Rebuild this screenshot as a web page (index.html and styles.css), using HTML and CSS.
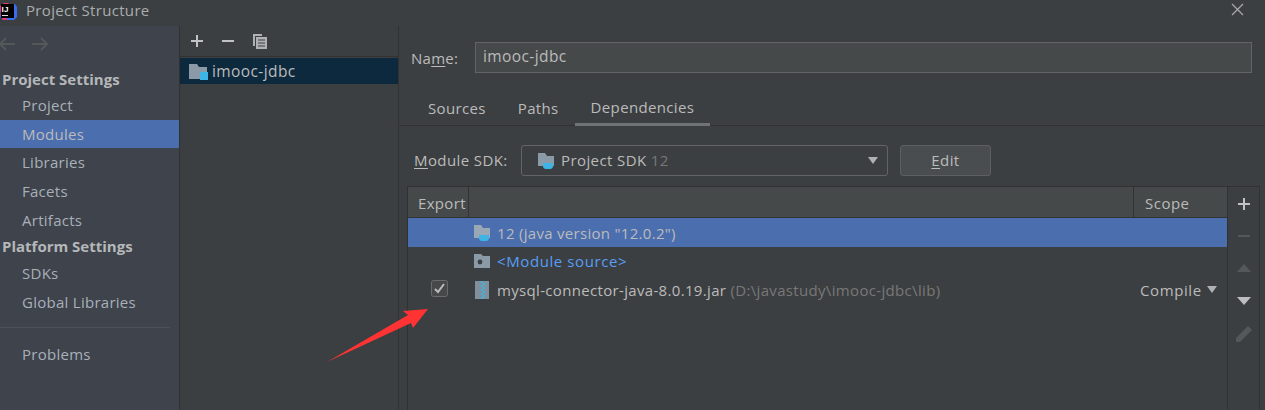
FILE: index.html
```html
<!DOCTYPE html>
<html lang="en">
<head>
<meta charset="utf-8">
<title>Project Structure</title>
<link rel="stylesheet" href="styles.css">
</head>
<body>
<div class="window">
  <header class="titlebar">
    <svg class="logo" width="17" height="17" viewBox="0 0 17 17"><path d="M2 1h13l2 3v10l-3 3H3L0 14z" fill="#3b6cf0"/><path d="M0 3l4-3h5L0 10z" fill="#f0366f"/><path d="M0 12l3 5h5l-8-6z" fill="#f0366f"/><rect x="1" y="1" width="13" height="14" fill="#000"/><rect x="2" y="12" width="6" height="1" fill="#ddd"/><text x="1.6" y="8.5" class="logo-text">IJ</text></svg>
    <span class="title">Project Structure</span>
    <svg class="close" width="13" height="13" viewBox="0 0 13 13"><path d="M1 1l11 11M12 1L1 12" stroke="#aaa" stroke-width="1.2" fill="none"/></svg>
  </header>
  <div class="main">
    <nav class="sidebar">
      <div class="arrows">
        <svg width="18" height="14" viewBox="0 0 18 14"><path d="M1 7h15M7 1L1 7l6 6" stroke="#55585b" stroke-width="2" fill="none"/></svg>
        <svg width="18" height="14" viewBox="0 0 18 14"><path d="M1 7h15M10 1l6 6-6 6" stroke="#55585b" stroke-width="2" fill="none"/></svg>
      </div>
      <div class="group">Project Settings</div>
      <div class="item">Project</div>
      <div class="item active">Modules</div>
      <div class="item">Libraries</div>
      <div class="item">Facets</div>
      <div class="item">Artifacts</div>
      <div class="group group-b">Platform Settings</div>
      <div class="item">SDKs</div>
      <div class="item">Global Libraries</div>
      <div class="sep"></div>
      <div class="item">Problems</div>
    </nav>
    <section class="modules">
      <div class="mod-toolbar">
        <svg width="14" height="14" viewBox="0 0 14 14"><path d="M7 1v12M1 7h12" stroke="#c0c2c4" stroke-width="2"/></svg>
        <svg width="14" height="14" viewBox="0 0 14 14"><path d="M1 7h12" stroke="#c0c2c4" stroke-width="2"/></svg>
        <svg width="16" height="17" viewBox="0 0 16 17"><path d="M1 1h9v2H3v10H1z" fill="#afb1b3"/><path d="M4 4h11v12H4z" fill="#afb1b3"/><path d="M6 7h7M6 10h7M6 13h7" stroke="#3c3f41" stroke-width="1"/></svg>
      </div>
      <div class="mod-row">
        <svg width="19" height="17" viewBox="0 0 19 17"><path d="M0 1h8l2 3h8v12H0z" fill="#8a9aa6"/><rect x="11" y="9" width="8" height="8" fill="#3db3e6"/></svg>
        <span>imooc-jdbc</span>
      </div>
    </section>
    <section class="detail">
      <div class="name-row">
        <label class="name-label">Na<u>m</u>e:</label>
        <div class="name-input">imooc-jdbc</div>
      </div>
      <div class="tabs">
        <div class="tab">Sources</div>
        <div class="tab">Paths</div>
        <div class="tab on">Dependencies</div>
      </div>
      <div class="sdk-row">
        <label class="sdk-label"><u>M</u>odule SDK:</label>
        <div class="combo">
          <svg width="18" height="18" viewBox="0 0 18 18"><path d="M1 1h7l2 3h7v10H1z" fill="#8a9aa6"/><path d="M6 11h10v3c0 2-1 3-3 3H9c-2 0-3-1-3-3z" fill="#3db3e6"/></svg>
          <span>Project SDK <span class="dim">12</span></span>
          <i class="caret combo-caret"></i>
        </div>
        <div class="edit"><u>E</u>dit</div>
      </div>
      <div class="deps">
        <div class="table">
          <div class="thead">
            <div class="th th-export">Export</div>
            <div class="th th-name"></div>
            <div class="th th-scope">Scope</div>
          </div>
          <div class="tr selected">
            <div class="c-name">
              <svg width="18" height="18" viewBox="0 0 18 18"><path d="M1 1h7l2 3h7v10H1z" fill="#9aa7b4"/><path d="M6 11h10v3c0 2-1 3-3 3H9c-2 0-3-1-3-3z" fill="#3db3e6"/></svg>
              <span>12 (java version "12.0.2")</span>
            </div>
          </div>
          <div class="tr tr-next">
            <div class="c-name">
              <svg width="18" height="18" viewBox="0 0 18 18"><path d="M1 2h7l2 2h7v12H1z" fill="#8a9aa6"/><circle cx="7" cy="10" r="2.4" fill="#3c3f41"/></svg>
              <span class="link">&lt;Module source&gt;</span>
            </div>
          </div>
          <div class="tr">
            <div class="check"><svg width="18" height="18" viewBox="0 0 18 18"><rect x=".5" y=".5" width="16" height="16" rx="2" fill="#45494a" stroke="#6b6b6b"/><path d="M4 9l3 3 6-8" stroke="#bdbdbd" stroke-width="2" fill="none"/></svg></div>
            <div class="c-name">
              <svg width="18" height="18" viewBox="0 0 18 18"><rect x="2" y="0" width="14" height="18" fill="#7f8f9c"/><path d="M8 0h2v2H8zM10 2h2v2h-2zM8 4h2v2H8zM10 6h2v2h-2zM8 8h2v2H8zM10 10h2v2h-2zM8 12h2v2H8zM10 14h2v2h-2zM8 16h2v2H8z" fill="#3db3e6"/></svg>
              <span>mysql-connector-java-8.0.19.jar <span class="dim">(D:\javastudy\imooc-jdbc\lib)</span></span>
            </div>
            <div class="c-scope">Compile<i class="caret"></i></div>
          </div>
        </div>
        <div class="side-tools">
          <svg width="14" height="14" viewBox="0 0 14 14"><path d="M7 1v12M1 7h12" stroke="#c0c2c4" stroke-width="2"/></svg>
          <svg width="14" height="14" viewBox="0 0 14 14"><path d="M1 7h12" stroke="#55585b" stroke-width="2"/></svg>
          <svg width="14" height="14" viewBox="0 0 14 14"><path d="M7 3l7 8H0z" fill="#55585b"/></svg>
          <svg width="14" height="14" viewBox="0 0 14 14"><path d="M0 4h14L7 12z" fill="#bcbec0"/></svg>
          <svg width="18" height="18" viewBox="0 0 18 18"><path d="M13 1l4 4L5 17H1v-4z" fill="#55585b"/></svg>
        </div>
      </div>
    </section>
  </div>
  <svg class="arrow" width="110" height="56" viewBox="0 0 110 56"><path d="M0 54L81 7 76 3 101 1 86 20 84 15z" fill="#ff3333"/></svg>
</div>
</body>
</html>
```
FILE: styles.css
```css
* { box-sizing: border-box; }
html, body { margin: 0; padding: 0; }
body { background: #3c3f41; }
.window {
  position: relative;
  width: 1265px;
  height: 410px;
  overflow: hidden;
  display: flex;
  flex-direction: column;
  background: #3c3f41;
  color: #bbbbbb;
  font-family: "Open Sans", "Noto Sans", sans-serif;
  font-size: 15px;
  letter-spacing: 0.27px;
}
u { text-underline-offset: 2px; }
svg { display: block; flex: none; }
.titlebar {
  height: 26px;
  flex: none;
  display: flex;
  align-items: center;
}
.logo { margin-top: -3px; }
.logo-text { font: bold 8px "Liberation Sans", sans-serif; fill: #fff; }
.title { margin-left: 9px; margin-top: -6px; color: #a9adb0; letter-spacing: 0.33px; }
.close { margin-left: auto; margin-right: 21px; margin-top: -8px; }
.main { flex: 1; display: flex; min-height: 0; }
.sidebar {
  width: 180px;
  flex: none;
  background: #3e434c;
  border-right: 1px solid #323232;
}
.arrows { height: 36px; display: flex; align-items: center; gap: 14px; margin-left: -1px; }
.group { height: 29px; line-height: 35px; padding-left: 2px; font-weight: 700; color: #b5b7b9; letter-spacing: 0; }
.group-b { line-height: 24px; height: 24.5px; }
.item { height: 28.7px; line-height: 28px; padding-left: 22px; color: #a9b0b8; }
.item.active { background: #4b6eaf; color: #bbbbbb; }
.sep { height: 1px; margin: 11px 9px 12px 0; background: #4b5059; }
.modules { width: 219px; flex: none; border-right: 1px solid #323232; }
.mod-toolbar { height: 31px; display: flex; align-items: center; gap: 17px; padding-left: 10px; border-bottom: 1px solid #323232; }
.mod-row { height: 26px; margin-top: 1px; display: flex; align-items: center; gap: 4px; padding-left: 9px; background: #0d293e; font-size: 15.5px; letter-spacing: 0.4px; }
.detail { flex: 1; min-width: 0; display: flex; flex-direction: column; }
.name-row { display: flex; align-items: center; height: 31px; margin-top: 16px; padding-left: 12px; padding-right: 13px; }
.name-label { width: 64px; }
.name-input { flex: 1; height: 31px; line-height: 27px; padding-left: 7px; background: #45494a; border: 1px solid #646464; font-size: 15.5px; letter-spacing: 0.4px; }
.tabs { height: 53px; display: flex; align-items: flex-end; padding-left: 13px; border-bottom: 1px solid #323232; margin-bottom: 19px; letter-spacing: 0.35px; }
.tab { height: 33px; line-height: 33px; padding: 0 16px; }
.tab.on { border-bottom: 3px solid #6f7378; margin-bottom: -1px; height: 34px; line-height: 31px; }
.sdk-row { display: flex; align-items: center; height: 31px; padding-left: 15px; letter-spacing: 0.4px; }
.sdk-label { width: 107px; margin-top: -2px; }
.combo {
  width: 367px; height: 31px; display: flex; align-items: center; gap: 6px;
  padding-left: 15px; border: 1px solid #646464; border-radius: 3px; background: #3c3f41;
}
.combo span { margin-top: -1px; }
.dim { color: #787878; }
.caret { display: inline-block; width: 0; height: 0; border-left: 5.5px solid transparent; border-right: 5.5px solid transparent; border-top: 7px solid #afb1b3; }
.combo-caret { margin-left: auto; margin-right: 9px; }
.edit { width: 91px; height: 31px; margin-left: 12px; line-height: 28px; text-align: center; background: #4a4d4f; border: 1px solid #5e6060; border-radius: 3px; }
.deps { flex: 1; margin: 10px 5px 0 8px; display: flex; min-height: 0; border: 1px solid #323232; border-bottom: 0; border-left: 1px solid #2f3132; letter-spacing: 0.33px; }
.table { flex: 1; min-width: 0; border-right: 1px solid #323232; }
.thead { height: 31px; display: flex; background: #45494a; border-bottom: 1px solid #323232; align-items: stretch; }
.th { line-height: 32px; padding-left: 10px; }
.th-export { width: 60px; }
.th-name { flex: 1; border-left: 1px solid #323232; }
.th-scope { width: 94px; border-left: 1px solid #323232; padding-left: 11px; letter-spacing: 0.5px; }
.tr { height: 29px; display: flex; align-items: center; padding-left: 65px; position: relative; }
.tr-next { height: 28px; }
.c-name { display: flex; align-items: center; gap: 6px; }
.tr.selected { background: #4b6eaf; }
.tr.selected .c-name { letter-spacing: 0.3px; }
.link { color: #589df6; letter-spacing: 0.6px; }
.check { position: absolute; left: 23px; top: 5px; }
.c-scope { margin-left: auto; width: 87px; display: flex; align-items: center; gap: 5px; letter-spacing: 0.6px; }
.side-tools { width: 31px; flex: none; display: flex; flex-direction: column; align-items: center; gap: 18px; padding-top: 10px; }
.arrow { position: absolute; left: 327px; top: 308px; }
```
